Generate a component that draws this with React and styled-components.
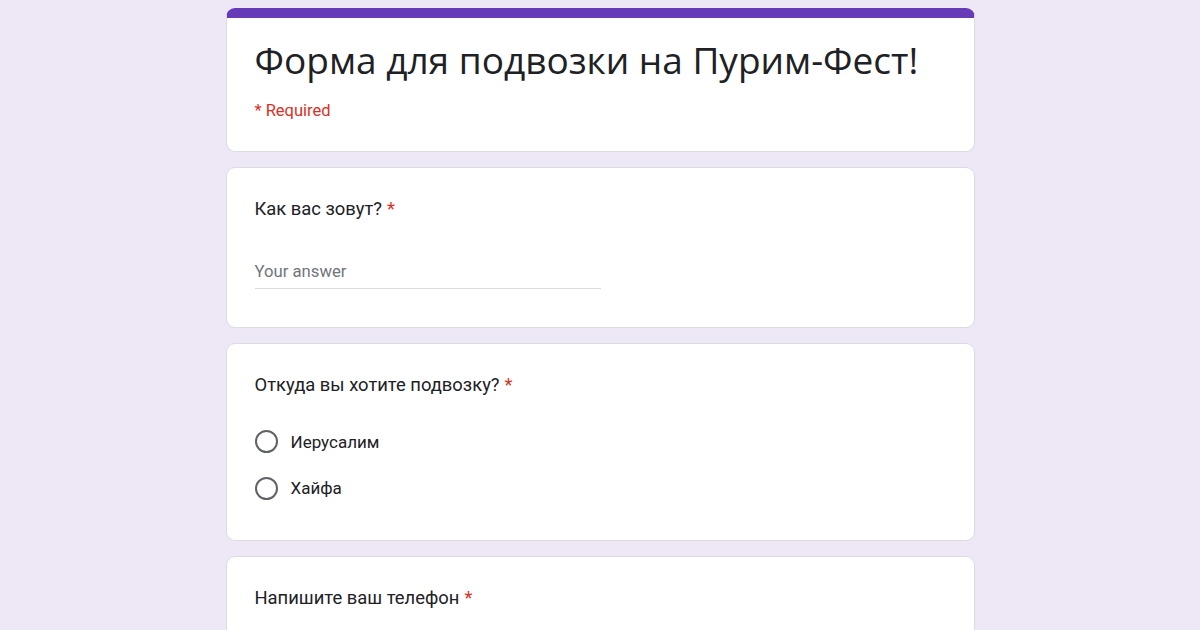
import React from "react";
import styled, { createGlobalStyle } from "styled-components";

const Global = createGlobalStyle`
  html, body { margin: 0; padding: 0; }
  body {
    background: #ede7f6;
    font-family: Roboto, "Liberation Sans", Arial, sans-serif;
    color: #202124;
    width: 1200px;
    height: 630px;
    overflow: hidden;
  }
`;

const Page = styled.div`
  display: flex;
  flex-direction: column;
  align-items: center;
  gap: 15px;
  padding-top: 8px;
`;

const Card = styled.section`
  box-sizing: border-box;
  width: 749px;
  background: #fff;
  border: 1px solid #dadce0;
  border-radius: 9px;
  padding: ${(p) => p.$pad || "0 28px"};
  overflow: hidden;
  flex-shrink: 0;
`;

const HeaderCard = styled(Card)`
  border-top: 10px solid #673ab7;
  padding: 14px 28px 29px;
`;

const Title = styled.h1`
  margin: 0;
  font-family: "Open Sans", Roboto, sans-serif;
  font-weight: 400;
  font-size: 37px;
  line-height: 56px;
  color: #202124;
  letter-spacing: 0;
`;

const RequiredNote = styled.div`
  margin-top: 12px;
  font-size: 16.5px;
  line-height: 22px;
  color: #d93025;
`;

const QTitle = styled.div`
  font-size: 18.4px;
  line-height: 24px;
  color: #202124;
`;

const Star = styled.span`
  color: #d93025;
  margin-left: 5px;
`;

const AnswerField = styled.div`
  margin-top: 40px;
  width: 346px;
  border-bottom: 1px solid #dadce0;
  padding-bottom: 5px;
  font-size: 16.7px;
  line-height: 22px;
  color: #70757a;
`;

const Options = styled.div`
  margin-top: 33px;
  display: flex;
  flex-direction: column;
  gap: 23.5px;
`;

const Option = styled.label`
  display: flex;
  align-items: center;
  gap: 13px;
  font-size: 17px;
  line-height: 22px;
  color: #202124;
`;

const Radio = styled.span`
  box-sizing: border-box;
  width: 23px;
  height: 23px;
  border: 2px solid #5f6368;
  border-radius: 50%;
  flex-shrink: 0;
`;

export default function App() {
  return (
    <>
      <Global />
      <Page>
        <HeaderCard>
          <Title>Форма для подвозки на Пурим-Фест!</Title>
          <RequiredNote>* Required</RequiredNote>
        </HeaderCard>
        <Card $pad="29px 28px 38px">
          <QTitle>
            Как вас зовут?<Star>*</Star>
          </QTitle>
          <AnswerField>Your answer</AnswerField>
        </Card>
        <Card $pad="29px 28px 40.5px">
          <QTitle>
            Откуда вы хотите подвозку?<Star>*</Star>
          </QTitle>
          <Options>
            <Option>
              <Radio />
              Иерусалим
            </Option>
            <Option>
              <Radio />
              Хайфа
            </Option>
          </Options>
        </Card>
        <Card $pad="29px 28px 60px">
          <QTitle>
            Напишите ваш телефон<Star>*</Star>
          </QTitle>
        </Card>
      </Page>
    </>
  );
}
